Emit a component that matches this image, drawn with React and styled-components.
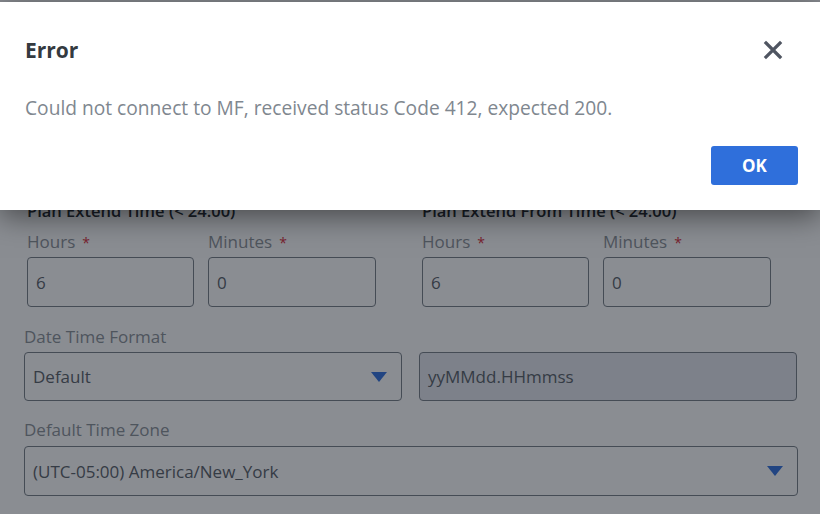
import React from "react";
import styled, { createGlobalStyle } from "styled-components";

const GlobalStyle = createGlobalStyle`
  html, body {
    margin: 0;
    padding: 0;
    background: #ffffff;
    font-family: "Open Sans", "Liberation Sans", sans-serif;
  }
  * {
    box-sizing: border-box;
  }
`;

const Page = styled.div`
  width: 820px;
  height: 514px;
  overflow: hidden;
  position: relative;
  background: #ffffff;
`;

const Form = styled.div`
  padding: 200px 22px 0 24px;
`;

const Columns = styled.div`
  display: grid;
  grid-template-columns: 378px 378px;
  column-gap: 17px;
  padding-left: ${(p) => p.$inset || 0}px;
`;

const Section = styled.div`
  display: flex;
  flex-direction: column;
`;

const SectionTitle = styled.div`
  font-size: 16.5px;
  line-height: 22px;
  font-weight: 600;
  color: #2a2f34;
`;

const Pair = styled.div`
  display: flex;
  gap: 14px;
  margin-top: 9px;
`;

const Field = styled.div`
  display: flex;
  flex-direction: column;
  width: ${(p) => p.$width || "100%"};
  margin-top: ${(p) => p.$top || 0}px;
`;

const Label = styled.label`
  display: block;
  height: 22px;
  font-size: 17px;
  line-height: 22px;
  color: #8f959c;
`;

const Required = styled.span`
  color: #dc3545;
  margin-left: 7px;
  font-size: 14px;
  line-height: 0;
`;

const Input = styled.div`
  margin-top: ${(p) => p.$gap || 4}px;
  height: ${(p) => p.$height || 50}px;
  border: 1px solid #7d848c;
  border-radius: 4px;
  background: ${(p) => (p.$readOnly ? "#e7e9f0" : "#ffffff")};
  display: flex;
  align-items: center;
  justify-content: space-between;
  padding: 0 14px 0 8px;
  font-size: 17px;
  color: #5f666e;
`;

const Caret = styled.svg`
  width: 16px;
  height: 10px;
  flex: none;
`;

const Overlay = styled.div`
  position: absolute;
  inset: 0;
  background: rgba(6, 13, 23, 0.47);
`;

const Dialog = styled.div`
  position: absolute;
  top: 2px;
  left: 0;
  right: 0;
  height: 208px;
  background: #ffffff;
  box-shadow: 0 6px 28px rgba(0, 0, 0, 0.5);
  padding: 32px 22px 25px 25px;
  display: flex;
  flex-direction: column;
`;

const Header = styled.div`
  display: flex;
  align-items: center;
  justify-content: space-between;
  height: 32px;
  padding-right: 15px;
`;

const Title = styled.h2`
  margin: 0;
  font-size: 21px;
  line-height: 32px;
  font-weight: 700;
  color: #343a40;
`;

const Close = styled.button`
  border: none;
  background: none;
  padding: 0;
  width: 20px;
  height: 20px;
  display: flex;
  cursor: pointer;
`;

const Message = styled.p`
  margin: 30px 0 0;
  font-size: 19.2px;
  line-height: 24px;
  color: #80878f;
`;

const Footer = styled.div`
  display: flex;
  justify-content: flex-end;
  margin-top: 26px;
`;

const OkButton = styled.button`
  width: 87px;
  height: 39px;
  border: none;
  border-radius: 3px;
  background: #2f6fdb;
  color: #ffffff;
  font-family: inherit;
  font-size: 17px;
  font-weight: 700;
  cursor: pointer;
`;

const DownCaret = () => (
  <Caret viewBox="0 0 16 10">
    <polygon points="0,0 16,0 8,10" fill="#3b78e0" />
  </Caret>
);

const TimeGroup = ({ title }) => (
  <Section>
    <SectionTitle>{title}</SectionTitle>
    <Pair>
      <Field $width="167px">
        <Label>
          Hours<Required>*</Required>
        </Label>
        <Input>6</Input>
      </Field>
      <Field $width="168px">
        <Label>
          Minutes<Required>*</Required>
        </Label>
        <Input>0</Input>
      </Field>
    </Pair>
  </Section>
);

export default function App() {
  return (
    <Page>
      <GlobalStyle />
      <Form>
        <Columns $inset={3}>
          <TimeGroup title="Plan Extend Time (< 24:00)" />
          <TimeGroup title="Plan Extend From Time (< 24:00)" />
        </Columns>
        <Field $top={19}>
          <Label>Date Time Format</Label>
          <Columns>
            <Input $height={49}>
              Default
              <DownCaret />
            </Input>
            <Input $height={49} $readOnly>
              yyMMdd.HHmmss
            </Input>
          </Columns>
        </Field>
        <Field $top={18}>
          <Label>Default Time Zone</Label>
          <Input $gap={5}>
            (UTC-05:00) America/New_York
            <DownCaret />
          </Input>
        </Field>
      </Form>
      <Overlay>
        <Dialog role="dialog">
          <Header>
            <Title>Error</Title>
            <Close aria-label="Close">
              <svg viewBox="0 0 20 20" width="20" height="20">
                <path
                  d="M3 3 L17 17 M17 3 L3 17"
                  stroke="#4f5561"
                  strokeWidth="3.2"
                  strokeLinecap="square"
                />
              </svg>
            </Close>
          </Header>
          <Message>
            Could not connect to MF, received status Code 412, expected 200.
          </Message>
          <Footer>
            <OkButton>OK</OkButton>
          </Footer>
        </Dialog>
      </Overlay>
    </Page>
  );
}
